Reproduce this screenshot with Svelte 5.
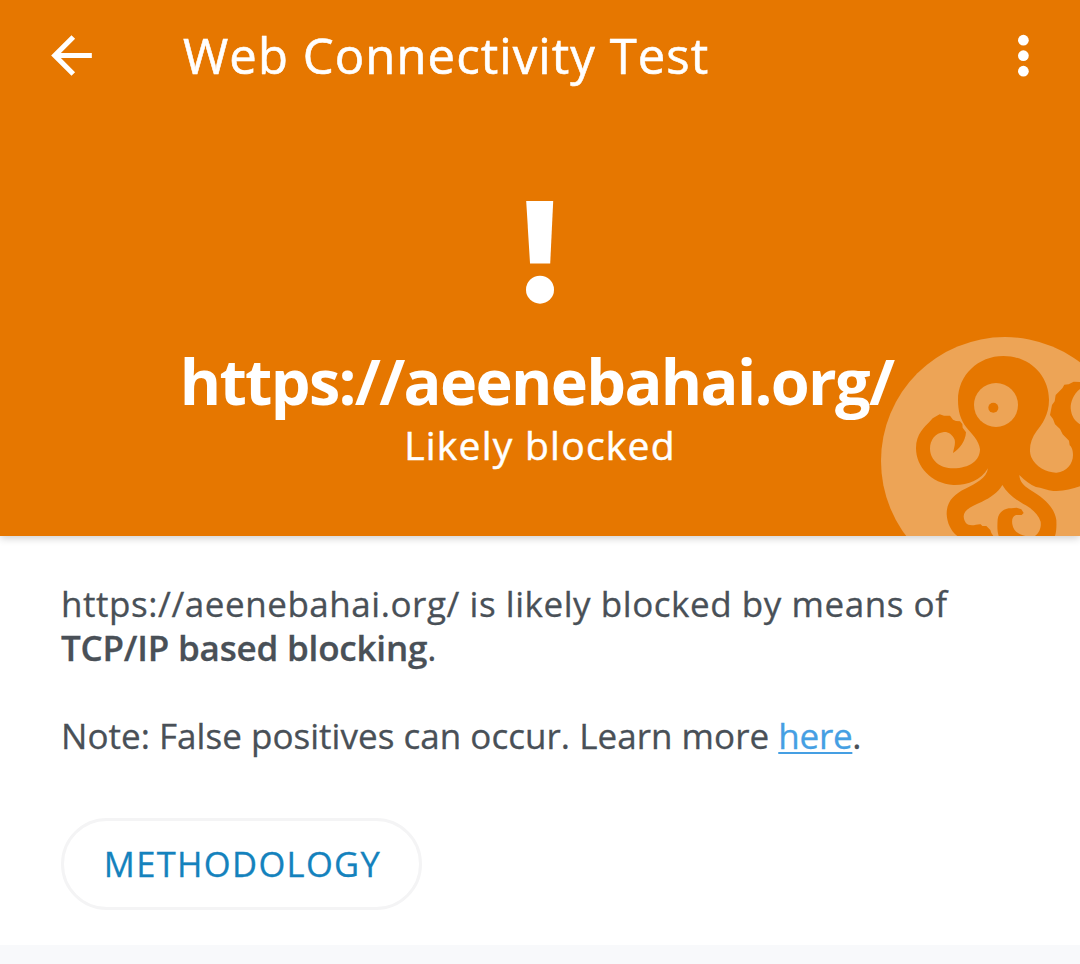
<script>
  const site = 'https://aeenebahai.org/';
</script>

<div class="screen">
  <header>
    <div class="toolbar">
      <button class="icon" aria-label="Back">
        <svg viewBox="0 0 24 24" width="61" height="61"><path d="M20 11H7.83l5.59-5.59L12 4l-8 8 8 8 1.41-1.41L7.83 13H20z" /></svg>
      </button>
      <h1>Web Connectivity Test</h1>
      <button class="icon" aria-label="More options">
        <svg viewBox="0 0 24 24" width="62" height="62"><circle cx="12.150" cy="5.900" r="2.08" /><circle cx="12.150" cy="11.900" r="2.08" /><circle cx="12.150" cy="17.900" r="2.08" /></svg>
      </button>
    </div>
    <svg class="mark" viewBox="0 0 28 103" width="28" height="103">
      <path d="M.2 0H27.200L24.200 62.500H4z" /><circle cx="14" cy="88.700" r="14" />
    </svg>
    <h2>{site}</h2>
    <p class="status">Likely blocked</p>
    <svg class="octopus" viewBox="0 0 630 633" width="210" height="211" aria-hidden="true">
      <circle cx="405" cy="408" r="372" class="pale" />
      <path class="body" d="M264 225C264 150 325 93 400 93C478 93 537 150 537 225C537 268 517 298 500 318C481 343 475 374 484 397C496 426 532 444 560 443C590 441 609 416 609 390C609 372 603 364 599 361L597 347L578 328L570 312L555 298L549 282L540 270L546 240L554 229L557 210L577 190L583 179L596 178L611 170L630 171V192C610 208 602 230 602 250C604 274 615 289 630 298V484C605 492 580 500 550 498C532 497 514 488 498 486C481 480 465 467 448 450C449 468 459 481 480 494C520 518 553 545 559 585C560 605 559 620 555 633H495C510 622 514 605 512 590C505 567 485 550 460 537C432 521 411 504 397 480C384 502 362 518 336 530C306 543 281 555 281 574C282 591 290 601 306 601C315 601 324 597 332 598L337 603L349 603L355 609L361 615L364 624L370 633H262C242 619 231 592 230 568C229 530 252 507 286 491C317 476 350 460 354 430C331 467 294 481 250 480C183 476 138 424 138 370C138 326 164 306 180 289L188 280L209 268L222 272H240L249 284L258 288L270 289L277 297L278 308L288 322C286 350 269 371 249 384C251 371 257 359 254 344C247 327 233 320 222 321C195 324 180 346 180 371C181 406 210 430 250 430C298 430 330 407 330 373C327 345 304 326 290 308C271 284 264 258 264 225Z" />
      <path class="body" d="M386 633C381 618 382 600 383 583C387 559 405 549 424 550L440 548L454 553L461 564L455 570H438C427 574 425 584 427 598C430 619 447 629 466 633Z" />
      <circle cx="378" cy="240" r="66" class="pale" />
      <circle cx="370" cy="248" r="15" class="body" />
    </svg>
  </header>
  <main>
    <p class="line wide">{site} is likely blocked by means of</p>
    <p class="line"><b>TCP/IP based blocking</b>.</p>
    <p class="line note">Note: False positives can occur. Learn more <a href="#learn">here</a>.</p>
    <button class="method">METHODOLOGY</button>
  </main>
  <footer></footer>
</div>

<style>
  :global(body) { margin: 0; background: #fff; overflow: hidden; }
  .screen {
    width: 1080px;
    height: 964px;
    display: flex;
    flex-direction: column;
    overflow: hidden;
    font-family: "Open Sans", "Noto Sans", sans-serif;
    color: #495057;
  }
  h1, h2, p { margin: 0; white-space: nowrap; }
  button { font-family: inherit; padding: 0; background: none; border: 0; }
  header {
    position: relative;
    box-sizing: border-box;
    flex: none;
    height: 536px;
    padding-top: 25px;
    display: flex;
    flex-direction: column;
    align-items: center;
    background: #e67700;
    color: #fff;
    box-shadow: 0 2px 8px rgba(0, 0, 0, 0.2);
  }
  header svg { display: block; fill: #fff; }
  .toolbar {
    box-sizing: border-box;
    width: 100%;
    height: 61px;
    padding: 0 26px 0 41px;
    display: flex;
    align-items: center;
  }
  .icon { flex: none; }
  h1 {
    flex: 1;
    padding: 0 0 2px 81px;
    font-size: 49px;
    line-height: 60px;
    font-weight: 400;
    letter-spacing: 1.08px;
    -webkit-text-stroke: 0.6px currentColor;
  }
  .mark { margin-top: 115px; }
  h2 {
    margin-top: 37px;
    padding-right: 7px;
    font-size: 63px;
    line-height: 80px;
    font-weight: 700;
    letter-spacing: -1.68px;
  }
  .status {
    font-size: 39px;
    line-height: 48px;
    letter-spacing: 1.25px;
    -webkit-text-stroke: 0.5px currentColor;
  }
  .octopus { position: absolute; right: 0; bottom: 0; }
  header .octopus .pale { fill: #eda456; }
  header .octopus .body { fill: #e67700; }
  h2, .status { position: relative; z-index: 1; }
  main {
    box-sizing: border-box;
    height: 409px;
    padding: 46px 61px 0;
    display: flex;
    flex-direction: column;
    align-items: flex-start;
  }
  .line {
    font-size: 35px;
    line-height: 44px;
    letter-spacing: 0.03px;
    -webkit-text-stroke: 0.3px currentColor;
  }
  .wide { letter-spacing: 0.55px; }
  b { font-weight: 600; letter-spacing: -0.2px; }
  .note { margin-top: 44px; }
  a {
    color: #459fe3;
    letter-spacing: -0.25px;
    text-decoration: underline;
    text-decoration-thickness: 2px;
    text-underline-offset: 3px;
    text-decoration-skip-ink: none;
  }
  .method {
    box-sizing: border-box;
    width: 361px;
    height: 92px;
    margin-top: 60px;
    border: 3px solid #f4f4f5;
    border-radius: 46px;
    padding: 0 0 1px 2px;
    color: #1482bd;
    font-size: 34.5px;
    letter-spacing: 1.35px;
    -webkit-text-stroke: 0.3px currentColor;
  }
  footer { flex: 1; background: #f8f9fb; }
</style>
